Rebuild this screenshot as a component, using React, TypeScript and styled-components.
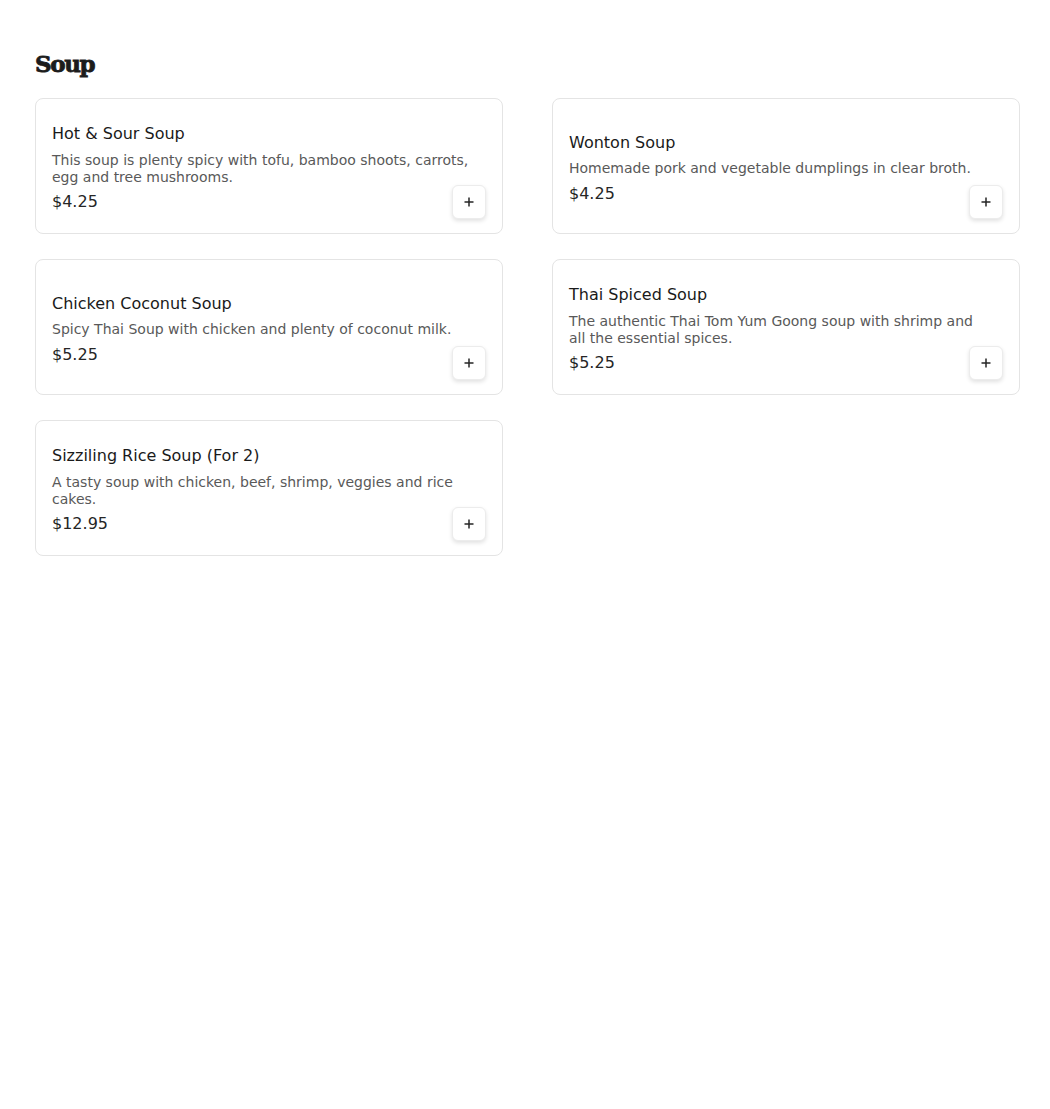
import styled, { createGlobalStyle } from "styled-components";

const GlobalStyle = createGlobalStyle`
  body {
    margin: 0;
    background: #fff;
    font-family: "DejaVu Sans", "Noto Sans", sans-serif;
    color: #1a1a1a;
  }
`;

const Page = styled.main`
  padding: 48px 30px 40px 35px;
`;

const SectionTitle = styled.h2`
  margin: 0 0 18px;
  font-family: "DejaVu Serif", "Liberation Serif", serif;
  font-weight: 900;
  font-size: 23px;
  line-height: 32px;
  letter-spacing: -1.4px;
  color: #1c1c1c;
  -webkit-text-stroke: 0.8px #1c1c1c;
`;

const Grid = styled.div`
  display: grid;
  grid-template-columns: repeat(2, 1fr);
  column-gap: 49px;
  row-gap: 25px;
`;

const Card = styled.article`
  display: flex;
  align-items: center;
  min-height: 102px;
  padding: 16px;
  border: 1px solid #e4e4e4;
  border-radius: 8px;
  background: #fff;
`;

const Info = styled.div`
  flex: 1;
  min-width: 0;
  margin-right: -18px;
  padding-top: 4px;
`;

const Name = styled.h3`
  margin: 0 0 5.5px;
  font-size: 16px;
  line-height: 24px;
  font-weight: 500;
  color: #1a1a1a;
`;

const Description = styled.p`
  margin: 0 0 4.5px;
  font-size: 14px;
  line-height: 17px;
  color: #595959;
`;

const Price = styled.p`
  margin: 0;
  font-size: 16px;
  line-height: 24px;
  color: #262626;
`;

const AddButton = styled.button`
  align-self: flex-end;
  flex: none;
  display: flex;
  align-items: center;
  justify-content: center;
  width: 34px;
  height: 34px;
  margin-bottom: -2px;
  padding: 0;
  border: 1px solid #ececec;
  border-radius: 6px;
  background: #fff;
  box-shadow: 0 2px 4px rgba(0, 0, 0, 0.12);
  cursor: pointer;
`;

const PlusIcon = () => (
  <svg width="10" height="10" viewBox="0 0 10 10" aria-hidden="true">
    <path d="M5 0.5v9M0.5 5h9" stroke="#262626" strokeWidth="1.5" />
  </svg>
);

type Item = { name: string; description: string; price: string };

const soups: Item[] = [
  {
    name: "Hot & Sour Soup",
    description: "This soup is plenty spicy with tofu, bamboo shoots, carrots, egg and tree mushrooms.",
    price: "$4.25",
  },
  {
    name: "Wonton Soup",
    description: "Homemade pork and vegetable dumplings in clear broth.",
    price: "$4.25",
  },
  {
    name: "Chicken Coconut Soup",
    description: "Spicy Thai Soup with chicken and plenty of coconut milk.",
    price: "$5.25",
  },
  {
    name: "Thai Spiced Soup",
    description: "The authentic Thai Tom Yum Goong soup with shrimp and all the essential spices.",
    price: "$5.25",
  },
  {
    name: "Sizziling Rice Soup (For 2)",
    description: "A tasty soup with chicken, beef, shrimp, veggies and rice cakes.",
    price: "$12.95",
  },
];

function MenuCard({ item }: { item: Item }) {
  return (
    <Card>
      <Info>
        <Name>{item.name}</Name>
        <Description>{item.description}</Description>
        <Price>{item.price}</Price>
      </Info>
      <AddButton aria-label={`Add ${item.name}`}>
        <PlusIcon />
      </AddButton>
    </Card>
  );
}

export default function App() {
  return (
    <>
      <GlobalStyle />
      <Page>
        <SectionTitle>Soup</SectionTitle>
        <Grid>
          {soups.map((s) => (
            <MenuCard key={s.name} item={s} />
          ))}
        </Grid>
      </Page>
    </>
  );
}
